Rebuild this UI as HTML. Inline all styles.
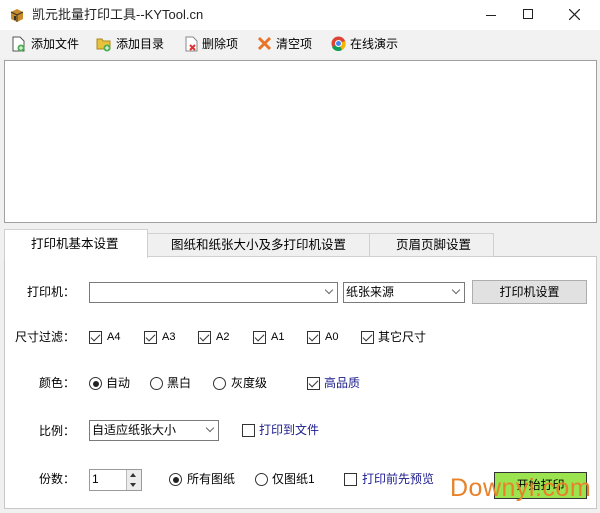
<!DOCTYPE html>
<html><head><meta charset="utf-8"><style>
*{margin:0;padding:0;box-sizing:border-box}
body{width:600px;height:513px;background:#f0f0f0;position:relative;overflow:hidden;font:12px "Liberation Sans","Noto Sans CJK SC",sans-serif;color:#000}
.a{position:absolute;white-space:nowrap}
.t{line-height:16px}
.cb{position:absolute;width:13px;height:13px;border:1px solid #333;background:#fff}
.cb.k::after{content:"";position:absolute;left:3px;top:0px;width:4px;height:8px;border:solid #333;border-width:0 1.5px 1.5px 0;transform:rotate(45deg)}
.rd{position:absolute;width:13px;height:13px;border:1px solid #333;border-radius:50%;background:#fff}
.rd.k::after{content:"";position:absolute;left:2.5px;top:2.5px;width:6px;height:6px;border-radius:50%;background:#222}
.combo{position:absolute;background:#fff;border:1px solid #7a7a7a;height:21px;padding-left:2px;line-height:19px}
.combo .ar{position:absolute;right:5px;top:4px;width:6px;height:6px;border:solid #666;border-width:0 1px 1px 0;transform:rotate(45deg)}
.blue{color:#1a1a8c}
</style></head><body>
<div class="a" style="left:0;top:0;width:600px;height:30px;background:#fff"></div>
<svg class="a" style="left:9px;top:7px" width="16" height="16"><path d="M2 5l6-3 6 3v7l-6 3-6-3z" fill="#c98b2a"/><path d="M2 5l6 3 6-3M8 8v7" stroke="#333" fill="none"/><rect x="5" y="9" width="2" height="4" fill="#333"/></svg>
<div class="a t" style="left:32px;top:7px;font-size:13px;color:#222">凯元批量打印工具--KYTool.cn</div>
<div class="a" style="left:486px;top:15px;width:10px;height:1px;background:#222"></div>
<div class="a" style="left:523px;top:9px;width:10px;height:10px;border:1px solid #222"></div>
<svg class="a" style="left:569px;top:9px" width="11" height="11"><path d="M0 0L11 11M11 0L0 11" stroke="#222" stroke-width="1.2"/></svg>
<div class="a" style="left:0;top:30px;width:600px;height:28px;background:#f2f2f2"></div>
<svg class="a" style="left:11px;top:36px" width="16" height="16"><path d="M2 1h7l4 4v10H2z" fill="#fff" stroke="#555"/><circle cx="10" cy="12" r="3.5" fill="#4caf50"/><path d="M8 12h4M10 10v4" stroke="#fff"/></svg>
<div class="a t" style="left:31px;top:36px">添加文件</div>
<svg class="a" style="left:96px;top:36px" width="16" height="16"><path d="M1 3h5l1 2h7v8H1z" fill="#e8c23c" stroke="#a88a20"/><circle cx="11" cy="12" r="3.5" fill="#4caf50"/><path d="M9 12h4M11 10v4" stroke="#fff"/></svg>
<div class="a t" style="left:116px;top:36px">添加目录</div>
<svg class="a" style="left:184px;top:36px" width="16" height="16"><path d="M2 1h7l4 4v10H2z" fill="#fff" stroke="#888"/><path d="M6 9l5 5M11 9l-5 5" stroke="#d33" stroke-width="2"/></svg>
<div class="a t" style="left:202px;top:36px">删除项</div>
<svg class="a" style="left:257px;top:36px" width="15" height="15"><path d="M2 2L13 13M13 2L2 13" stroke="#e8742a" stroke-width="3"/></svg>
<div class="a t" style="left:276px;top:36px">清空项</div>
<svg class="a" style="left:331px;top:36px" width="15" height="15"><circle cx="7.5" cy="7.5" r="7" fill="#db4437"/><path d="M7.5 7.5L1 11A7 7 0 0 0 11 14z" fill="#0f9d58"/><path d="M7.5 7.5L14 5A7 7 0 0 1 11 14z" fill="#f4b400"/><circle cx="7.5" cy="7.5" r="3" fill="#4285f4" stroke="#fff"/></svg>
<div class="a t" style="left:350px;top:36px">在线演示</div>
<div class="a" style="left:4px;top:60px;width:593px;height:163px;background:#fff;border:1px solid #a0a0a0"></div>
<div class="a" style="left:4px;top:256px;width:593px;height:253px;background:#fff;border:1px solid #c8c8c8"></div>
<div class="a" style="left:147px;top:233px;width:223px;height:24px;background:#f0f0f0;border:1px solid #d0d0d0"></div>
<div class="a" style="left:369px;top:233px;width:125px;height:24px;background:#f0f0f0;border:1px solid #d0d0d0"></div>
<div class="a" style="left:4px;top:229px;width:144px;height:29px;background:#fff;border:1px solid #d0d0d0;border-bottom:none"></div>
<div class="a t" style="left:31px;top:236px;font-size:12.5px">打印机基本设置</div>
<div class="a t" style="left:171px;top:237px;font-size:12.5px">图纸和纸张大小及多打印机设置</div>
<div class="a t" style="left:396px;top:237px;font-size:12.5px">页眉页脚设置</div>
<div class="a t" style="left:27px;top:284px">打印机：</div>
<div class="combo" style="left:89px;top:282px;width:249px"><span class="ar"></span></div>
<div class="combo" style="left:343px;top:282px;width:122px">纸张来源<span class="ar"></span></div>
<div class="a" style="left:472px;top:280px;width:115px;height:24px;background:#e1e1e1;border:1px solid #adadad;text-align:center;line-height:22px">打印机设置</div>
<div class="a t" style="left:15px;top:329px">尺寸过滤：</div>
<div class="cb k" style="left:89px;top:331px"></div><div class="a t" style="left:107px;top:329px;font-size:11px">A4</div>
<div class="cb k" style="left:144px;top:331px"></div><div class="a t" style="left:162px;top:329px;font-size:11px">A3</div>
<div class="cb k" style="left:198px;top:331px"></div><div class="a t" style="left:216px;top:329px;font-size:11px">A2</div>
<div class="cb k" style="left:253px;top:331px"></div><div class="a t" style="left:271px;top:329px;font-size:11px">A1</div>
<div class="cb k" style="left:307px;top:331px"></div><div class="a t" style="left:325px;top:329px;font-size:11px">A0</div>
<div class="cb k" style="left:361px;top:331px"></div><div class="a t" style="left:378px;top:329px">其它尺寸</div>
<div class="a t" style="left:39px;top:375px">颜色：</div>
<div class="rd k" style="left:89px;top:377px"></div><div class="a t" style="left:106px;top:375px">自动</div>
<div class="rd" style="left:150px;top:377px"></div><div class="a t" style="left:167px;top:375px">黑白</div>
<div class="rd" style="left:213px;top:377px"></div><div class="a t" style="left:231px;top:375px">灰度级</div>
<div class="cb k" style="left:307px;top:377px"></div><div class="a t blue" style="left:324px;top:375px">高品质</div>
<div class="a t" style="left:39px;top:423px">比例：</div>
<div class="combo" style="left:89px;top:420px;width:130px">自适应纸张大小<span class="ar"></span></div>
<div class="cb" style="left:242px;top:424px"></div><div class="a t blue" style="left:259px;top:422px">打印到文件</div>
<div class="a t" style="left:39px;top:471px">份数：</div>
<div class="a" style="left:89px;top:469px;width:53px;height:22px;background:#fff;border:1px solid #9a9a9a;padding-left:2px;line-height:18px">1</div>
<div class="a" style="left:126px;top:470px;width:15px;height:20px;background:#ececec;border-left:1px solid #bbb"></div>
<div class="a" style="left:130px;top:473px;border:3px solid transparent;border-bottom:4px solid #333;border-top:0"></div>
<div class="a" style="left:130px;top:483px;border:3px solid transparent;border-top:4px solid #333;border-bottom:0"></div>
<div class="rd k" style="left:169px;top:473px"></div><div class="a t" style="left:187px;top:471px">所有图纸</div>
<div class="rd" style="left:255px;top:473px"></div><div class="a t" style="left:272px;top:471px">仅图纸1</div>
<div class="cb" style="left:344px;top:473px"></div><div class="a t blue" style="left:362px;top:471px">打印前先预览</div>
<div class="a" style="left:494px;top:472px;width:93px;height:27px;background:#9be34f;border:1px solid #333;text-align:center;line-height:25px">开始打印</div>
<div class="a" style="left:450px;top:474px;font-size:25px;color:#e8822a;line-height:28px;letter-spacing:0.5px">Downyi.com</div>
</body></html>
